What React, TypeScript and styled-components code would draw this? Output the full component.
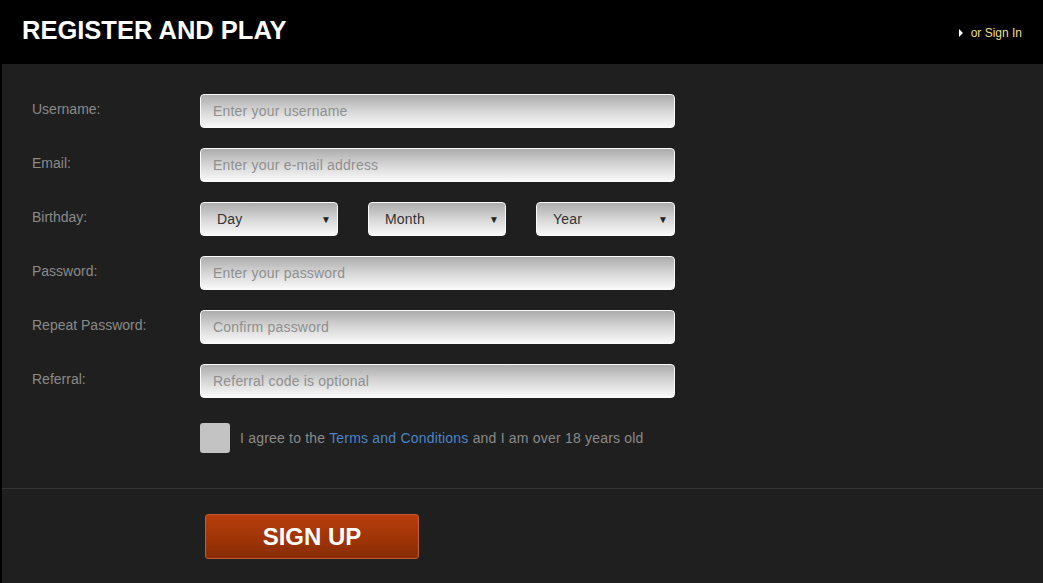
import styled, { createGlobalStyle } from "styled-components";

const GlobalStyle = createGlobalStyle`
  html, body {
    margin: 0;
    padding: 0;
    background: #000;
  }
  body {
    font-family: "Liberation Sans", Arial, sans-serif;
  }
`;

const fields = [
  { label: "Username:", placeholder: "Enter your username" },
  { label: "Email:", placeholder: "Enter your e-mail address" },
  { label: "Birthday:", selects: ["Day", "Month", "Year"] },
  { label: "Password:", placeholder: "Enter your password", type: "password" },
  { label: "Repeat Password:", placeholder: "Confirm password", type: "password" },
  { label: "Referral:", placeholder: "Referral code is optional" },
];

const App = () => {
  return (
    <>
      <GlobalStyle />
      <Page>
        <Header>
          <Title>REGISTER AND PLAY</Title>
          <SignInLink href="#">
            <Arrow />
            or Sign In
          </SignInLink>
        </Header>
        <Body>
          <Form>
            {fields.map((field) => (
              <Row key={field.label}>
                <Label>{field.label}</Label>
                {field.selects ? (
                  <SelectGroup>
                    {field.selects.map((name) => (
                      <SelectBox key={name}>
                        <span>{name}</span>
                        <Caret>▼</Caret>
                      </SelectBox>
                    ))}
                  </SelectGroup>
                ) : (
                  <TextInput type={field.type || "text"} placeholder={field.placeholder} />
                )}
              </Row>
            ))}
            <AgreeRow>
              <CheckBox />
              <AgreeText>
                I agree to the <TermsLink href="#">Terms and Conditions</TermsLink> and I am over 18
                years old
              </AgreeText>
            </AgreeRow>
          </Form>
          <Footer>
            <SignUpButton>SIGN UP</SignUpButton>
          </Footer>
        </Body>
      </Page>
    </>
  );
};

export default App;

/*
Styles
*/

const Page = styled.div`
  width: 1043px;
  height: 583px;
  display: flex;
  flex-direction: column;
  background: #000;
  overflow: hidden;
`;

const Header = styled.div`
  height: 64px;
  display: flex;
  align-items: center;
  justify-content: space-between;
  padding: 0 21px 0 22px;
  box-sizing: border-box;
  flex-shrink: 0;
`;

const Title = styled.h1`
  margin: 0 0 4px;
  color: #fff;
  font-size: 25.5px;
  font-weight: bold;
  letter-spacing: 0;
`;

const SignInLink = styled.a`
  display: flex;
  align-items: center;
  color: #f1df8c;
  font-size: 12px;
  text-decoration: none;
  margin-top: 2px;
`;

const Arrow = styled.span`
  width: 0;
  height: 0;
  border-top: 4px solid transparent;
  border-bottom: 4px solid transparent;
  border-left: 4px solid #fff;
  margin-right: 8px;
`;

const Body = styled.div`
  flex: 1;
  margin-left: 2px;
  background: #1f1f1f;
  display: flex;
  flex-direction: column;
`;

const Form = styled.div`
  display: flex;
  flex-direction: column;
  gap: 20px;
  padding: 30px 0 0 30px;
  height: 425px;
  box-sizing: border-box;
  border-bottom: 1px solid #353535;
`;

const Row = styled.div`
  display: flex;
  align-items: center;
  height: 34px;
`;

const Label = styled.label`
  width: 168px;
  color: #8a8a8a;
  font-size: 14px;
  margin-top: -4px;
`;

const fieldSkin = `
  height: 34px;
  box-sizing: border-box;
  border: 1px solid #fafafa;
  border-radius: 4px;
  background: linear-gradient(to bottom, #acacac 0%, #d6d6d6 50%, #f9f9f9 100%);
  font-family: "Liberation Sans", Arial, sans-serif;
  font-size: 14px;
  letter-spacing: 0.2px;
`;

const TextInput = styled.input`
  ${fieldSkin}
  width: 475px;
  padding: 0 12px;
  color: #333;
  outline: none;

  &::placeholder {
    color: #8f8f8f;
  }
`;

const SelectGroup = styled.div`
  display: flex;
  gap: 30px;
  width: 475px;
`;

const SelectBox = styled.div`
  ${fieldSkin}
  width: 138px;
  display: flex;
  align-items: center;
  justify-content: space-between;
  padding: 0 6px 0 16px;
  color: #333;
  cursor: pointer;

  &:last-child {
    width: 139px;
  }
`;

const Caret = styled.span`
  font-size: 10px;
  color: #222;
`;

const AgreeRow = styled.div`
  display: flex;
  align-items: center;
  margin: 5px 0 0 168px;
`;

const CheckBox = styled.div`
  width: 30px;
  height: 30px;
  border-radius: 3px;
  background: #c3c3c3;
  margin-right: 10px;
`;

const AgreeText = styled.span`
  color: #8a8a8a;
  font-size: 14px;
  letter-spacing: 0.2px;
`;

const TermsLink = styled.a`
  color: #4c84c7;
  text-decoration: none;
`;

const Footer = styled.div`
  padding: 25px 0 0 203px;
`;

const SignUpButton = styled.button`
  width: 214px;
  height: 45px;
  border: 1px solid #c35a32;
  border-radius: 3px;
  background: linear-gradient(to bottom, #b83e0b 0%, #a23507 50%, #882c05 100%);
  color: #fff;
  font-family: "Liberation Sans", Arial, sans-serif;
  font-size: 24px;
  font-weight: bold;
  cursor: pointer;
`;
